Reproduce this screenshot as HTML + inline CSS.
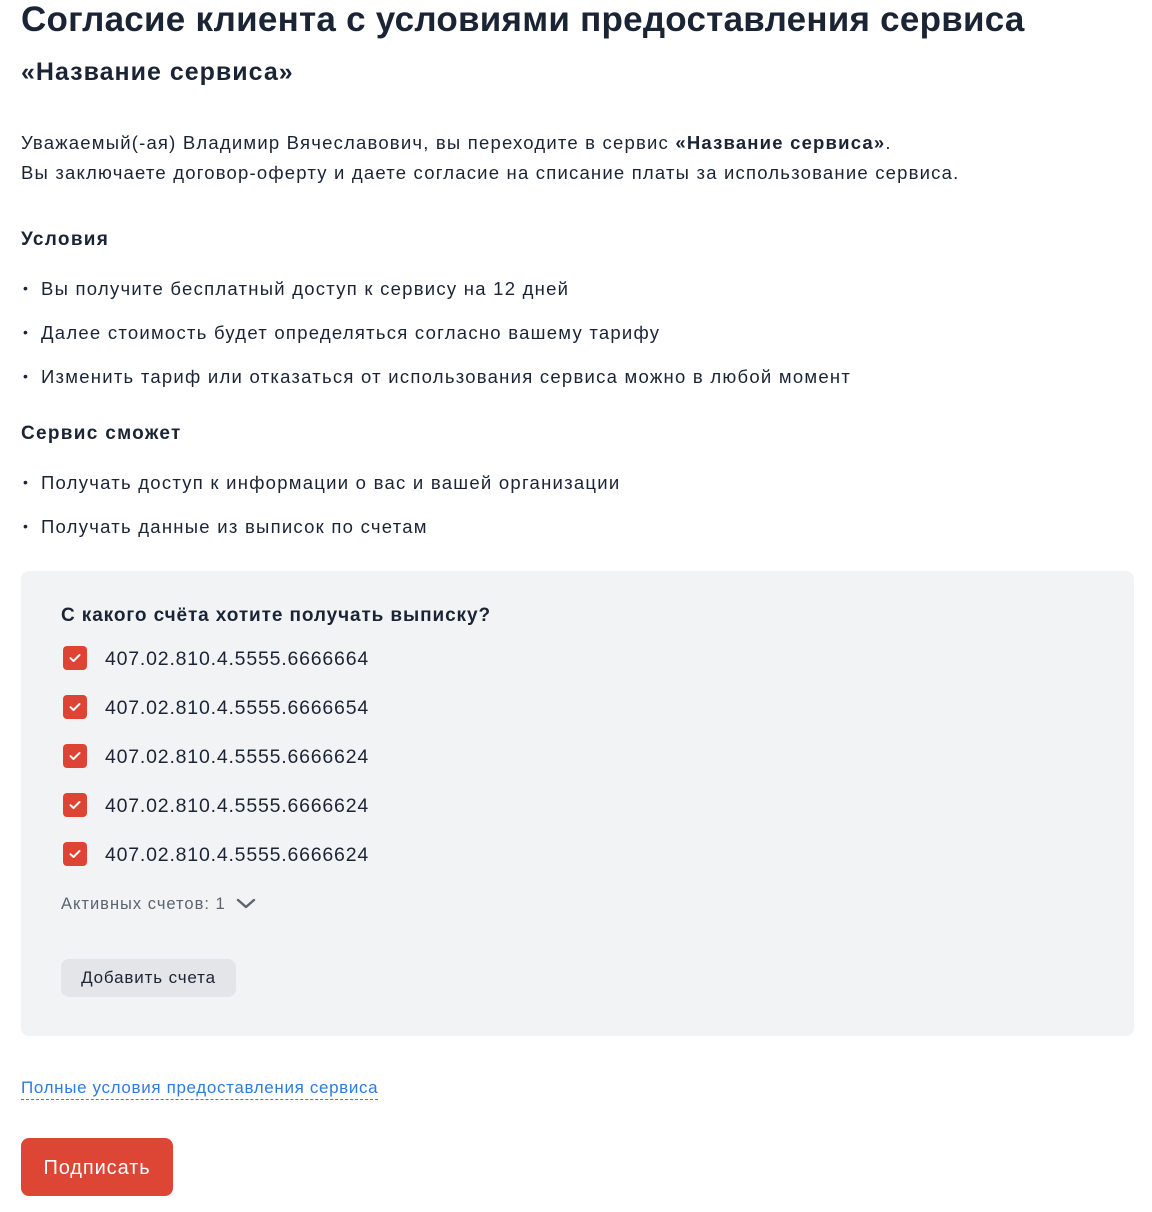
<!DOCTYPE html>
<html><head><meta charset="utf-8"><style>
*{margin:0;padding:0;box-sizing:border-box}
body{width:1152px;height:1212px;background:#fff;font-family:"Liberation Sans",sans-serif;color:#1b2434;position:relative;overflow:hidden}
.a{position:absolute;white-space:nowrap}
h1{position:absolute;left:21px;top:0px;font-size:35px;font-weight:bold;letter-spacing:0.25px;white-space:nowrap}
h2{position:absolute;left:21px;top:58px;font-size:25px;font-weight:bold;letter-spacing:1px;white-space:nowrap}
.p{font-size:18.5px;left:21px;letter-spacing:1.2px}
.h3{font-size:19px;font-weight:bold;left:21px;letter-spacing:1.3px}
.li{font-size:18.5px;left:21px;letter-spacing:1.25px}
.li:before{content:"•";display:inline-block;width:20px;font-size:14px;position:relative;top:-2px;left:2px;letter-spacing:0}
.box{position:absolute;left:21px;top:571px;width:1113px;height:465px;background:#f2f3f5;border-radius:8px}
.cb{position:absolute;left:63px;width:24px;height:24px;background:#dd4433;border-radius:4px}
.cb svg{position:absolute;left:6px;top:7px}
.acc{left:105px;font-size:19.5px;letter-spacing:0.8px}
</style></head><body>
<h1>Согласие клиента с условиями предоставления сервиса</h1>
<h2>«Название сервиса»</h2>
<div class="a p" style="top:132px">Уважаемый(-ая) Владимир Вячеславович, вы переходите в сервис <b>«Название сервиса»</b>.</div>
<div class="a p" style="top:162px">Вы заключаете договор-оферту и даете согласие на списание платы за использование сервиса.</div>
<div class="a h3" style="top:229px">Условия</div>
<div class="a li" style="top:278px">Вы получите бесплатный доступ к сервису на 12 дней</div>
<div class="a li" style="top:322px">Далее стоимость будет определяться согласно вашему тарифу</div>
<div class="a li" style="top:366px">Изменить тариф или отказаться от использования сервиса можно в любой момент</div>
<div class="a h3" style="top:423px">Сервис сможет</div>
<div class="a li" style="top:472px">Получать доступ к информации о вас и вашей организации</div>
<div class="a li" style="top:516px">Получать данные из выписок по счетам</div>
<div class="box"></div>
<div class="a h3" style="left:61px;top:605px;letter-spacing:0.9px">С какого счёта хотите получать выписку?</div>
<div class="cb" style="top:646px"><svg width="12" height="10" viewBox="0 0 12 10"><path d="M1.5 5.2L4.5 8 10.5 2" fill="none" stroke="#fff" stroke-width="2" stroke-linecap="round" stroke-linejoin="round"/></svg></div>
<div class="a acc" style="top:648px">407.02.810.4.5555.6666664</div>
<div class="cb" style="top:695px"><svg width="12" height="10" viewBox="0 0 12 10"><path d="M1.5 5.2L4.5 8 10.5 2" fill="none" stroke="#fff" stroke-width="2" stroke-linecap="round" stroke-linejoin="round"/></svg></div>
<div class="a acc" style="top:697px">407.02.810.4.5555.6666654</div>
<div class="cb" style="top:744px"><svg width="12" height="10" viewBox="0 0 12 10"><path d="M1.5 5.2L4.5 8 10.5 2" fill="none" stroke="#fff" stroke-width="2" stroke-linecap="round" stroke-linejoin="round"/></svg></div>
<div class="a acc" style="top:746px">407.02.810.4.5555.6666624</div>
<div class="cb" style="top:793px"><svg width="12" height="10" viewBox="0 0 12 10"><path d="M1.5 5.2L4.5 8 10.5 2" fill="none" stroke="#fff" stroke-width="2" stroke-linecap="round" stroke-linejoin="round"/></svg></div>
<div class="a acc" style="top:795px">407.02.810.4.5555.6666624</div>
<div class="cb" style="top:842px"><svg width="12" height="10" viewBox="0 0 12 10"><path d="M1.5 5.2L4.5 8 10.5 2" fill="none" stroke="#fff" stroke-width="2" stroke-linecap="round" stroke-linejoin="round"/></svg></div>
<div class="a acc" style="top:844px">407.02.810.4.5555.6666624</div>
<div class="a" style="left:61px;top:895px;font-size:16.5px;color:#5c6470;letter-spacing:1px">Активных счетов: 1</div>
<svg class="a" style="left:236px;top:897px" width="20" height="14" viewBox="0 0 20 14"><path d="M2 3L10 10 18 3" fill="none" stroke="#5c6470" stroke-width="2.4" stroke-linecap="round" stroke-linejoin="round"/></svg>
<div class="a" style="left:61px;top:959px;width:175px;height:38px;background:#e3e5e9;border-radius:8px;font-size:17px;line-height:38px;text-align:center;letter-spacing:0.85px">Добавить счета</div>
<div class="a" style="left:21px;top:1078px;font-size:17px;color:#2e7ce0;border-bottom:1px dashed #2e7ce0;padding-bottom:1px;letter-spacing:0.65px">Полные условия предоставления сервиса</div>
<div class="a" style="left:21px;top:1138px;width:152px;height:58px;background:#dd4534;border-radius:8px;color:#fff;font-size:20px;line-height:60px;text-align:center;letter-spacing:0.9px">Подписать</div>
</body></html>
